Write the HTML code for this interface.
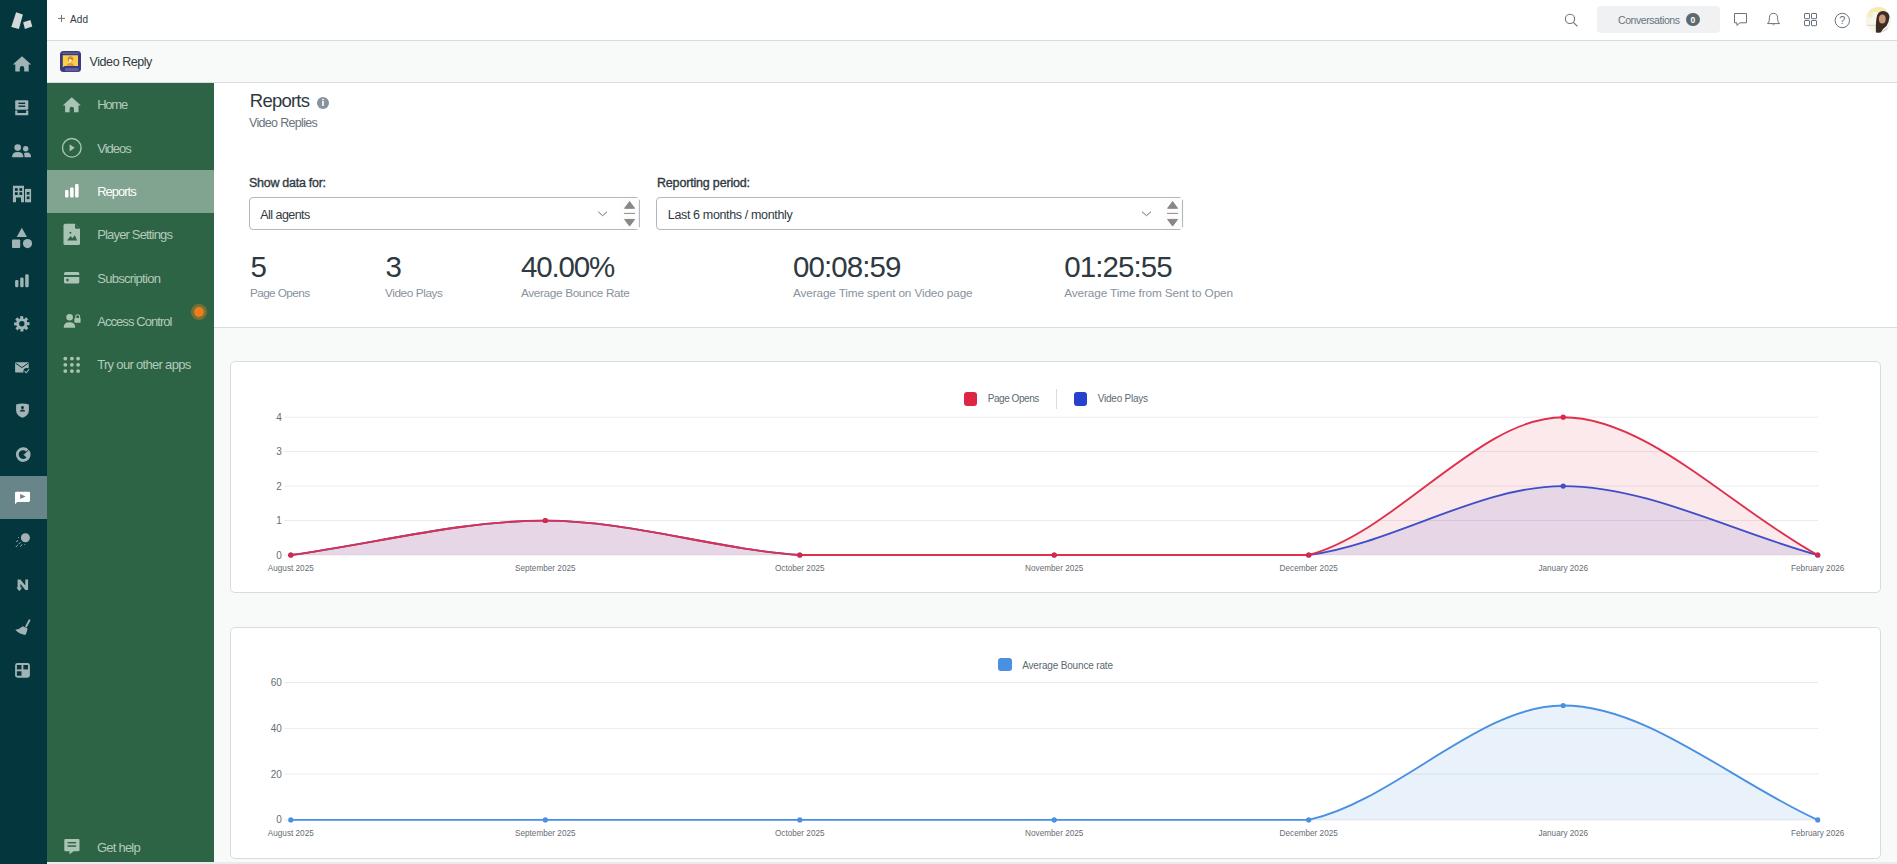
<!DOCTYPE html>
<html><head><meta charset="utf-8">
<style>
*{box-sizing:border-box;margin:0;padding:0}
html,body{width:1897px;height:864px;overflow:hidden;background:#e9ebed;font-family:"Liberation Sans",sans-serif}
.abs{position:absolute}
.tx{position:absolute;white-space:nowrap}
svg text{font-family:"Liberation Sans",sans-serif}
</style></head><body>
<div class="abs" style="left:0;top:0;width:47px;height:864px;background:#03363d"></div>
<div class="abs" style="left:47px;top:0;width:1850px;height:41px;background:#fff;border-bottom:1px solid #d8dcde"></div>
<div class="abs" style="left:47px;top:41px;width:1850px;height:42px;background:#f8f9f9;border-bottom:1px solid #d8dcde"></div>
<div class="abs" style="left:47px;top:83px;width:167px;height:779px;background:#2e6446"></div>
<div class="abs" style="left:214px;top:83px;width:1683px;height:779px;background:#f8f9f9"></div>
<div class="abs" style="left:214px;top:83px;width:1683px;height:245px;background:#fff;border-bottom:1px solid #d8dcde"></div>
<div class="abs" style="left:0;top:476px;width:47px;height:43px;background:#68868a"></div>
<div class="abs" style="left:47px;top:169.67px;width:167px;height:43.33px;background:#80a48f"></div>
<div class="abs" style="left:1597px;top:6px;width:123px;height:26.5px;background:#f0f1f3;border-radius:4px"></div>
<div class="abs" style="left:1686.2px;top:12.7px;width:13.4px;height:13.4px;border-radius:7px;background:#5c6970"></div>
<div class="abs" style="left:317px;top:96.9px;width:12px;height:12px;border-radius:6px;background:#87929d"></div>
<div class="abs" style="left:249px;top:197px;width:391px;height:33px;border:1px solid #b0b8be;border-radius:4px;background:#fff"></div>
<div class="abs" style="left:656px;top:197px;width:527px;height:33px;border:1px solid #b0b8be;border-radius:4px;background:#fff"></div>
<div class="abs" style="left:230px;top:361px;width:1651px;height:232px;background:#fff;border:1px solid #d8dcde;border-radius:5px"></div>
<div class="abs" style="left:230px;top:627px;width:1651px;height:232px;background:#fff;border:1px solid #d8dcde;border-radius:5px"></div>
<div class="tx" style="left:70.00px;top:14.54px;font-size:10px;line-height:10px;color:#2f3941;letter-spacing:0.100px;font-weight:400;">Add</div><div class="tx" style="left:1618.00px;top:14.91px;font-size:10.5px;line-height:10.5px;color:#68737d;letter-spacing:-0.425px;font-weight:400;">Conversations</div><div class="tx" style="left:89.60px;top:56.02px;font-size:12.5px;line-height:12.5px;color:#2f3941;letter-spacing:-0.440px;font-weight:400;">Video Reply</div><div class="tx" style="left:249.80px;top:92.34px;font-size:18.5px;line-height:18.5px;color:#2f3941;letter-spacing:-0.767px;font-weight:400;">Reports</div><div class="tx" style="left:249.00px;top:116.92px;font-size:12.5px;line-height:12.5px;color:#68737d;letter-spacing:-0.675px;font-weight:400;">Video Replies</div><div class="tx" style="left:249.00px;top:177.32px;font-size:12.5px;line-height:12.5px;color:#2f3941;letter-spacing:-0.277px;font-weight:400;-webkit-text-stroke:0.35px #2f3941;">Show data for:</div><div class="tx" style="left:657.00px;top:177.32px;font-size:12.5px;line-height:12.5px;color:#2f3941;letter-spacing:-0.181px;font-weight:400;-webkit-text-stroke:0.35px #2f3941;">Reporting period:</div><div class="tx" style="left:260.30px;top:209.32px;font-size:12.5px;line-height:12.5px;color:#2f3941;letter-spacing:-0.544px;font-weight:400;">All agents</div><div class="tx" style="left:667.80px;top:209.32px;font-size:12.5px;line-height:12.5px;color:#2f3941;letter-spacing:-0.355px;font-weight:400;">Last 6 months / monthly</div><div class="tx" style="left:250.40px;top:251.93px;font-size:29.5px;line-height:29.5px;color:#2f3941;letter-spacing:0.000px;font-weight:400;">5</div><div class="tx" style="left:385.50px;top:251.93px;font-size:29.5px;line-height:29.5px;color:#2f3941;letter-spacing:0.000px;font-weight:400;">3</div><div class="tx" style="left:521.00px;top:251.93px;font-size:29.5px;line-height:29.5px;color:#2f3941;letter-spacing:-1.140px;font-weight:400;">40.00%</div><div class="tx" style="left:793.00px;top:251.93px;font-size:29.5px;line-height:29.5px;color:#2f3941;letter-spacing:-0.914px;font-weight:400;">00:08:59</div><div class="tx" style="left:1064.20px;top:251.93px;font-size:29.5px;line-height:29.5px;color:#2f3941;letter-spacing:-0.900px;font-weight:400;">01:25:55</div><div class="tx" style="left:249.90px;top:287.91px;font-size:11.8px;line-height:11.8px;color:#87929d;letter-spacing:-0.589px;font-weight:400;">Page Opens</div><div class="tx" style="left:385.00px;top:287.91px;font-size:11.8px;line-height:11.8px;color:#87929d;letter-spacing:-0.410px;font-weight:400;">Video Plays</div><div class="tx" style="left:521.00px;top:287.91px;font-size:11.8px;line-height:11.8px;color:#87929d;letter-spacing:-0.356px;font-weight:400;">Average Bounce Rate</div><div class="tx" style="left:793.00px;top:287.91px;font-size:11.8px;line-height:11.8px;color:#87929d;letter-spacing:-0.135px;font-weight:400;">Average Time spent on Video page</div><div class="tx" style="left:1064.20px;top:287.91px;font-size:11.8px;line-height:11.8px;color:#87929d;letter-spacing:-0.114px;font-weight:400;">Average Time from Sent to Open</div><div class="tx" style="left:97.20px;top:98.30px;font-size:13px;line-height:13px;color:#b3cabb;letter-spacing:-1.233px;font-weight:400;">Home</div><div class="tx" style="left:97.20px;top:141.63px;font-size:13px;line-height:13px;color:#b3cabb;letter-spacing:-0.980px;font-weight:400;">Videos</div><div class="tx" style="left:97.20px;top:184.96px;font-size:13px;line-height:13px;color:#fff;letter-spacing:-1.000px;font-weight:400;">Reports</div><div class="tx" style="left:97.20px;top:228.29px;font-size:13px;line-height:13px;color:#b3cabb;letter-spacing:-0.836px;font-weight:400;">Player Settings</div><div class="tx" style="left:97.20px;top:271.62px;font-size:13px;line-height:13px;color:#b3cabb;letter-spacing:-0.709px;font-weight:400;">Subscription</div><div class="tx" style="left:97.20px;top:314.95px;font-size:13px;line-height:13px;color:#b3cabb;letter-spacing:-0.931px;font-weight:400;">Access Control</div><div class="tx" style="left:97.20px;top:358.28px;font-size:13px;line-height:13px;color:#b3cabb;letter-spacing:-0.688px;font-weight:400;">Try our other apps</div><div class="tx" style="left:96.90px;top:840.80px;font-size:13px;line-height:13px;color:#b3cabb;letter-spacing:-0.757px;font-weight:400;">Get help</div>
<svg class="abs" style="left:0;top:0" width="1897" height="864" viewBox="0 0 1897 864">
<polygon points="16.1,12.3 22.9,14.4 18.9,29 11.3,26.9" fill="#d3d9da"/>
<polygon points="23.2,22.3 30.4,19.9 32.3,26.6 24.9,29" fill="#d3d9da"/>
<path d="M22 56.2 L31.2 64.6 L28.7 64.6 L28.7 71.5 L24.2 71.5 L24.2 68.3 A2.2 2.2 0 0 0 19.8 68.3 L19.8 71.5 L15.3 71.5 L15.3 64.6 L12.8 64.6 Z" fill="#a1b3b5"/>
<rect x="15.2" y="100.3" width="13.1" height="9.4" rx="1" fill="#a1b3b5"/>
<rect x="18.4" y="102.6" width="6.8" height="1.4" fill="#03363d"/>
<rect x="18.4" y="105.5" width="6.8" height="1.4" fill="#03363d"/>
<path d="M15.2 110.6 H17.4 V112.9 H26.1 V110.6 H28.3 V114.4 Q28.3 115.3 27.4 115.3 H16.1 Q15.2 115.3 15.2 114.4 Z" fill="#a1b3b5"/>
<circle cx="17.7" cy="147.6" r="3.3" fill="#a1b3b5"/>
<path d="M12 157.3 Q12 152 17.7 152 Q23.4 152 23.4 157.3 Z" fill="#a1b3b5"/>
<circle cx="25.7" cy="148.8" r="2.7" fill="#a1b3b5"/>
<path d="M24 153.2 Q25 152.6 27 152.6 Q31.1 152.8 31.1 157.3 H24.6 Q24.6 155 24 153.2 Z" fill="#a1b3b5"/>
<path d="M12.9 185.7 H24 V202.3 H21 V197.4 H16 V202.3 H12.9 Z" fill="#a1b3b5"/>
<rect x="14.9" y="188.1" width="2.8" height="2.8" fill="#03363d"/>
<rect x="19.4" y="188.1" width="2.8" height="2.8" fill="#03363d"/>
<rect x="14.9" y="192.2" width="2.8" height="2.8" fill="#03363d"/>
<rect x="19.4" y="192.2" width="2.8" height="2.8" fill="#03363d"/>
<rect x="25" y="188.9" width="6.1" height="13.4" fill="#a1b3b5"/>
<rect x="26.7" y="192" width="2.8" height="2.6" fill="#03363d"/>
<rect x="26.7" y="196.5" width="2.8" height="2.6" fill="#03363d"/>
<polygon points="21.8,227.8 27,237 16.7,237" fill="#a1b3b5"/>
<rect x="12" y="239.4" width="8.2" height="8.6" rx="1" fill="#a1b3b5"/>
<circle cx="27.5" cy="243.6" r="4.6" fill="#a1b3b5"/>
<rect x="15.1" y="280" width="3.3" height="7.3" rx="1.3" fill="#a1b3b5"/>
<rect x="20.2" y="277.6" width="3.4" height="9.7" rx="1.3" fill="#a1b3b5"/>
<rect x="25.2" y="274.3" width="3.5" height="13" rx="1.3" fill="#a1b3b5"/>
<rect x="20.20" y="316.10" width="3" height="4" transform="rotate(0 21.8 323.8)" fill="#a1b3b5"/>
<rect x="20.20" y="316.10" width="3" height="4" transform="rotate(45 21.8 323.8)" fill="#a1b3b5"/>
<rect x="20.20" y="316.10" width="3" height="4" transform="rotate(90 21.8 323.8)" fill="#a1b3b5"/>
<rect x="20.20" y="316.10" width="3" height="4" transform="rotate(135 21.8 323.8)" fill="#a1b3b5"/>
<rect x="20.20" y="316.10" width="3" height="4" transform="rotate(180 21.8 323.8)" fill="#a1b3b5"/>
<rect x="20.20" y="316.10" width="3" height="4" transform="rotate(225 21.8 323.8)" fill="#a1b3b5"/>
<rect x="20.20" y="316.10" width="3" height="4" transform="rotate(270 21.8 323.8)" fill="#a1b3b5"/>
<rect x="20.20" y="316.10" width="3" height="4" transform="rotate(315 21.8 323.8)" fill="#a1b3b5"/>
<circle cx="21.8" cy="323.8" r="5.6" fill="#a1b3b5"/>
<circle cx="21.8" cy="323.8" r="2.7" fill="#03363d"/>
<rect x="15.1" y="362.3" width="13.6" height="10.2" rx="0.8" fill="#a1b3b5"/>
<polyline points="15.6,363.2 21.9,367.6 28.2,363.2" fill="none" stroke="#03363d" stroke-width="1"/>
<circle cx="26.8" cy="371.4" r="3.4" fill="#03363d"/>
<polyline points="24.6,371.2 26.1,372.8 29.2,369.4" fill="none" stroke="#a1b3b5" stroke-width="1.1"/>
<path d="M16.1 404.6 Q22.5 402.4 28.9 404.6 V410.2 Q28.9 415.4 22.5 417.7 Q16.1 415.4 16.1 410.2 Z" fill="#a1b3b5"/>
<circle cx="22.5" cy="407.6" r="1.5" fill="#03363d"/>
<path d="M19.9 411.6 Q19.9 409.6 22.5 409.6 Q25.1 409.6 25.1 411.6 Z" fill="#03363d"/>
<path d="M29 450.2 A7.3 7.3 0 1 0 29 459 L26.6 457.2 A4.4 4.4 0 1 1 26.6 452 Z" fill="#a1b3b5"/>
<path d="M23.3 454.6 L28.6 449.6 A7.3 7.3 0 0 1 28.6 459.6 Z" fill="#a1b3b5"/>
<line x1="23.6" y1="454.6" x2="29.6" y2="448.8" stroke="#03363d" stroke-width="0.9"/>
<circle cx="25.4" cy="537.8" r="4.5" fill="#a1b3b5"/>
<line x1="20.6" y1="542.2" x2="15.8" y2="547" stroke="#a1b3b5" stroke-width="1" stroke-dasharray="3 1.2"/>
<line x1="18.2" y1="540.6" x2="16.2" y2="541.6" stroke="#a1b3b5" stroke-width="1"/>
<line x1="22" y1="544.4" x2="20.5" y2="546.5" stroke="#a1b3b5" stroke-width="1"/>
<circle cx="18.6" cy="537.4" r="0.5" fill="#a1b3b5"/>
<circle cx="24.8" cy="544.6" r="0.5" fill="#a1b3b5"/>
<path d="M17.6 579.4 H20.4 L25.3 585.6 V579.4 H28.1 V589.9 H25.3 L20.4 583.8 V587.6 H22.2 L19.3 591.2 L16.4 587.6 H17.6 Z" fill="#a1b3b5"/>
<line x1="29.4" y1="620.4" x2="26.2" y2="626.4" stroke="#a1b3b5" stroke-width="2" stroke-linecap="round"/>
<path d="M22.9 626.3 L27.6 628.6 Q27 632.5 25.4 635.1 Q19 634 15.3 629.8 Q19.5 629.2 22.9 626.3 Z" fill="#a1b3b5"/>
<rect x="15.1" y="663.1" width="14.8" height="14.6" rx="2.4" fill="#a1b3b5"/>
<rect x="16.9" y="665" width="4.6" height="4.4" fill="#03363d"/>
<rect x="23.4" y="665" width="4.6" height="4.4" fill="#03363d"/>
<rect x="16.9" y="671.3" width="4.6" height="4.4" fill="#03363d"/>
<path d="M16.4 491.7 H28.6 Q30 491.7 30 493.1 V500.6 Q30 502 28.6 502 H17.2 L15 504.2 V493.1 Q15 491.7 16.4 491.7 Z" fill="#fff"/>
<polygon points="20.2,493.9 25.6,496.4 20.2,498.9" fill="#68868a"/>
<path d="M71.8 97.3 L80.9 105.4 L78.5 105.4 L78.5 112.3 L74 112.3 L74 109 A2.2 2.2 0 0 0 69.6 109 L69.6 112.3 L65.1 112.3 L65.1 105.4 L62.7 105.4 Z" fill="#a9c4b3"/>
<circle cx="71.8" cy="147.8" r="9.3" fill="none" stroke="#a9c4b3" stroke-width="1.4"/>
<polygon points="69.6,144.2 69.6,151.4 74.8,147.8" fill="#a9c4b3"/>
<rect x="65.1" y="189.9" width="3.4" height="7.6" rx="1.1" fill="#fff"/>
<rect x="70.1" y="187.4" width="3.5" height="10.1" rx="1.1" fill="#fff"/>
<rect x="75.1" y="184" width="3.5" height="13.5" rx="1.1" fill="#fff"/>
<path d="M65 223.8 H75 L80 228.8 V243.6 Q80 245.1 78.5 245.1 H65 Q63.5 245.1 63.5 243.6 V225.3 Q63.5 223.8 65 223.8 Z" fill="#a9c4b3"/>
<path d="M75 223.8 V227.3 Q75 228.8 76.5 228.8 H80" fill="#2e6446"/>
<path d="M76.3 224.6 L79.2 227.6 H76.3 Z" fill="#a9c4b3" opacity="0"/>
<path d="M67 240.6 L70.6 236 L72.4 238.2 L74.8 235.2 L77.2 240.6 Z" fill="#2e6446"/>
<circle cx="70.4" cy="232.8" r="1" fill="#2e6446"/>
<path d="M65.5 272 H77.8 Q79.3 272 79.3 273.5 V275 H64 V273.5 Q64 272 65.5 272 Z" fill="#a9c4b3"/>
<path d="M64 276.9 H79.3 V282 Q79.3 283.5 77.8 283.5 H65.5 Q64 283.5 64 282 Z" fill="#a9c4b3"/>
<circle cx="67.5" cy="280.1" r="1.3" fill="#2e6446"/>
<circle cx="69.6" cy="317.3" r="3.3" fill="#a9c4b3"/>
<path d="M63.7 327.7 Q63.7 322.3 69.4 322.3 Q75.2 322.3 75.2 327.7 Z" fill="#a9c4b3"/>
<path d="M75.8 318.2 V316.6 A1.9 1.9 0 0 1 79.6 316.6 V318.2" fill="none" stroke="#a9c4b3" stroke-width="1.1"/>
<rect x="74.4" y="318" width="6.2" height="4.7" rx="0.7" fill="#a9c4b3"/>
<circle cx="65.3" cy="358.6" r="1.9" fill="#a9c4b3"/>
<circle cx="71.9" cy="358.6" r="1.9" fill="#a9c4b3"/>
<circle cx="78.1" cy="358.6" r="1.9" fill="#a9c4b3"/>
<circle cx="65.3" cy="364.8" r="1.9" fill="#a9c4b3"/>
<circle cx="71.9" cy="364.8" r="1.9" fill="#a9c4b3"/>
<circle cx="78.1" cy="364.8" r="1.9" fill="#a9c4b3"/>
<circle cx="65.3" cy="371.1" r="1.9" fill="#a9c4b3"/>
<circle cx="71.9" cy="371.1" r="1.9" fill="#a9c4b3"/>
<circle cx="78.1" cy="371.1" r="1.9" fill="#a9c4b3"/>
<path d="M65.3 839.1 H78.5 Q79.5 839.1 79.5 840.1 V850.3 Q79.5 851.3 78.5 851.3 H73.6 L69.5 854.3 V851.3 H65.3 Q64.3 851.3 64.3 850.3 V840.1 Q64.3 839.1 65.3 839.1 Z" fill="#a9c4b3"/>
<rect x="67.6" y="842" width="8.5" height="1.4" fill="#2e6446"/>
<rect x="67.6" y="845.3" width="8.5" height="1.5" fill="#2e6446"/>
<circle cx="199" cy="312" r="8" fill="#e8801d" opacity="0.4"/>
<circle cx="199" cy="312" r="4.9" fill="#ec7e1b"/>
<line x1="58" y1="18.4" x2="65" y2="18.4" stroke="#68737d" stroke-width="1"/>
<line x1="61.5" y1="15" x2="61.5" y2="22" stroke="#68737d" stroke-width="1"/>
<circle cx="1570" cy="18.9" r="4.6" fill="none" stroke="#68737d" stroke-width="1.1"/>
<line x1="1573.4" y1="22.3" x2="1577.4" y2="26.3" stroke="#68737d" stroke-width="1.1"/>
<path d="M1734.5 13.5 H1746.5 V22.8 H1740 L1736.9 25.4 V22.8 H1734.5 Z" fill="none" stroke="#68737d" stroke-width="1"/>
<path d="M1767.5 23.6 Q1769.4 22 1769.4 19.2 V17.6 Q1769.4 13.4 1773.5 13.4 Q1777.6 13.4 1777.6 17.6 V19.2 Q1777.6 22 1779.6 23.6 Z" fill="none" stroke="#68737d" stroke-width="1"/>
<path d="M1772.5 24 Q1773.5 25.6 1774.5 24" fill="none" stroke="#68737d" stroke-width="1"/>
<rect x="1804.5" y="13.5" width="5" height="5.2" rx="0.5" fill="none" stroke="#68737d" stroke-width="1"/>
<rect x="1811.5" y="13.5" width="5" height="5.2" rx="0.5" fill="none" stroke="#68737d" stroke-width="1"/>
<rect x="1804.5" y="20.5" width="5" height="5.2" rx="0.5" fill="none" stroke="#68737d" stroke-width="1"/>
<rect x="1811.5" y="20.5" width="5" height="5.2" rx="0.5" fill="none" stroke="#68737d" stroke-width="1"/>
<circle cx="1842.3" cy="20.5" r="7.2" fill="none" stroke="#68737d" stroke-width="1"/>
<text x="1842.3" y="24.4" font-size="11" fill="#68737d" text-anchor="middle">?</text>
<rect x="60" y="51" width="21" height="21" rx="3.5" fill="#3a3a7c"/>
<rect x="62" y="52.3" width="17" height="1.6" rx="0.8" fill="#5b5b9d"/>
<path d="M62.8 55.3 H78 V66 H64.5 L62.8 67.3 Z" fill="#f9cf4c"/>
<circle cx="70.4" cy="59" r="2.8" fill="#d38a33"/>
<path d="M66.8 66 Q66.8 63 70.4 63 Q74 63 74 66 Z" fill="#e09a3c"/>
<polygon points="69.3,58.8 69.3,62.4 72.3,60.6" fill="#fff"/>
<rect x="65" y="68" width="13.6" height="3.2" rx="0.8" fill="#5e5e9f"/>
<text x="1692.9" y="22.6" font-size="8.6" font-weight="bold" fill="#fff" text-anchor="middle">0</text>
<rect x="322.2" y="101" width="1.6" height="5" fill="#fff"/><circle cx="323" cy="99.6" r="0.9" fill="#fff"/>
<!-- selects -->
<polyline points="598.2,211.7 602.6,215.7 607,211.7" fill="none" stroke="#68737d" stroke-width="1"/>
<polyline points="1142,211.7 1146.5,215.7 1151,211.7" fill="none" stroke="#68737d" stroke-width="1"/>
<rect x="620.5" y="198" width="20" height="31" fill="#fdfdfd"/>
<line x1="639.4" y1="199.8" x2="639.4" y2="227.2" stroke="#b0b8be" stroke-width="1.1"/>
<polygon points="629.6,201.6 634.6,208.3 624.6,208.3" fill="#888" stroke="#888" stroke-width="1" stroke-linejoin="round"/><line x1="624" y1="213.4" x2="635" y2="213.4" stroke="#857a72" stroke-width="0.9"/><polygon points="624.6,219.4 634.6,219.4 629.6,226.1" fill="#888" stroke="#888" stroke-width="1" stroke-linejoin="round"/>
<rect x="1163.5" y="198" width="20" height="31" fill="#fdfdfd"/>
<line x1="1182.5" y1="199.8" x2="1182.5" y2="227.2" stroke="#b0b8be" stroke-width="1.1"/>
<polygon points="1172.6,201.6 1177.6,208.3 1167.6,208.3" fill="#888" stroke="#888" stroke-width="1" stroke-linejoin="round"/><line x1="1167" y1="213.4" x2="1178" y2="213.4" stroke="#857a72" stroke-width="0.9"/><polygon points="1167.6,219.4 1177.6,219.4 1172.6,226.1" fill="#888" stroke="#888" stroke-width="1" stroke-linejoin="round"/>
<!-- chart 1 legend -->
<rect x="964" y="392" width="13" height="14" rx="3" fill="#dc2643"/>
<text x="987.70" y="402.40" font-size="10" fill="#5c6970" letter-spacing="-0.444" text-anchor="start" font-weight="400">Page Opens</text>
<line x1="1056.5" y1="389" x2="1056.5" y2="409" stroke="#d8dcde"/>
<rect x="1074" y="392" width="13" height="14" rx="3" fill="#2541cd"/>
<text x="1097.80" y="402.40" font-size="10" fill="#5c6970" letter-spacing="-0.240" text-anchor="start" font-weight="400">Video Plays</text>
<line x1="284.3" y1="555.0" x2="1818" y2="555.0" stroke="#eaebec" stroke-width="1"/>
<text x="281.80" y="558.50" font-size="10" fill="#666d73" letter-spacing="0.000" text-anchor="end" font-weight="400">0</text>
<line x1="284.3" y1="520.5" x2="1818" y2="520.5" stroke="#eaebec" stroke-width="1"/>
<text x="281.80" y="524.05" font-size="10" fill="#666d73" letter-spacing="0.000" text-anchor="end" font-weight="400">1</text>
<line x1="284.3" y1="486.1" x2="1818" y2="486.1" stroke="#eaebec" stroke-width="1"/>
<text x="281.80" y="489.60" font-size="10" fill="#666d73" letter-spacing="0.000" text-anchor="end" font-weight="400">2</text>
<line x1="284.3" y1="451.6" x2="1818" y2="451.6" stroke="#eaebec" stroke-width="1"/>
<text x="281.80" y="455.15" font-size="10" fill="#666d73" letter-spacing="0.000" text-anchor="end" font-weight="400">3</text>
<line x1="284.3" y1="417.2" x2="1818" y2="417.2" stroke="#eaebec" stroke-width="1"/>
<text x="281.80" y="420.70" font-size="10" fill="#666d73" letter-spacing="0.000" text-anchor="end" font-weight="400">4</text>
<text x="290.80" y="570.90" font-size="8.2" fill="#666d73" letter-spacing="0.000" text-anchor="middle" font-weight="400">August 2025</text>
<text x="545.28" y="570.90" font-size="8.2" fill="#666d73" letter-spacing="0.000" text-anchor="middle" font-weight="400">September 2025</text>
<text x="799.76" y="570.90" font-size="8.2" fill="#666d73" letter-spacing="0.000" text-anchor="middle" font-weight="400">October 2025</text>
<text x="1054.24" y="570.90" font-size="8.2" fill="#666d73" letter-spacing="0.000" text-anchor="middle" font-weight="400">November 2025</text>
<text x="1308.72" y="570.90" font-size="8.2" fill="#666d73" letter-spacing="0.000" text-anchor="middle" font-weight="400">December 2025</text>
<text x="1563.20" y="570.90" font-size="8.2" fill="#666d73" letter-spacing="0.000" text-anchor="middle" font-weight="400">January 2026</text>
<text x="1817.68" y="570.90" font-size="8.2" fill="#666d73" letter-spacing="0.000" text-anchor="middle" font-weight="400">February 2026</text>
<path d="M290.80,555.00 C374.78,543.63 461.30,520.55 545.28,520.55 C629.26,520.55 715.40,549.29 799.76,555.00 C883.36,555.00 970.26,555.00 1054.24,555.00 C1138.22,555.00 1226.23,555.00 1308.72,555.00 C1394.18,543.43 1479.22,486.10 1563.20,486.10 C1647.18,486.10 1733.70,532.26 1817.68,555.00 L1817.68,555.0 L290.8,555.0 Z" fill="rgba(40,60,200,0.1)"/>
<path d="M290.80,555.00 C374.78,543.63 461.30,520.55 545.28,520.55 C629.26,520.55 715.40,549.29 799.76,555.00 C883.36,555.00 970.26,555.00 1054.24,555.00 C1138.22,555.00 1230.13,555.00 1308.72,555.00 C1398.09,530.80 1479.22,417.20 1563.20,417.20 C1647.18,417.20 1733.70,509.53 1817.68,555.00 L1817.68,555.0 L290.8,555.0 Z" fill="rgba(220,38,67,0.1)"/>
<path d="M290.80,555.00 C374.78,543.63 461.30,520.55 545.28,520.55 C629.26,520.55 715.40,549.29 799.76,555.00 C883.36,555.00 970.26,555.00 1054.24,555.00 C1138.22,555.00 1226.23,555.00 1308.72,555.00 C1394.18,543.43 1479.22,486.10 1563.20,486.10 C1647.18,486.10 1733.70,532.26 1817.68,555.00" fill="none" stroke="#3d4ec9" stroke-width="1.85"/>
<path d="M290.80,555.00 C374.78,543.63 461.30,520.55 545.28,520.55 C629.26,520.55 715.40,549.29 799.76,555.00 C883.36,555.00 970.26,555.00 1054.24,555.00 C1138.22,555.00 1230.13,555.00 1308.72,555.00 C1398.09,530.80 1479.22,417.20 1563.20,417.20 C1647.18,417.20 1733.70,509.53 1817.68,555.00" fill="none" stroke="#de2f4c" stroke-width="1.85"/>
<circle cx="290.8" cy="555.0" r="2.6" fill="#3d4ec9"/>
<circle cx="545.3" cy="520.5" r="2.6" fill="#3d4ec9"/>
<circle cx="799.8" cy="555.0" r="2.6" fill="#3d4ec9"/>
<circle cx="1054.2" cy="555.0" r="2.6" fill="#3d4ec9"/>
<circle cx="1308.7" cy="555.0" r="2.6" fill="#3d4ec9"/>
<circle cx="1563.2" cy="486.1" r="2.6" fill="#3d4ec9"/>
<circle cx="1817.7" cy="555.0" r="2.6" fill="#3d4ec9"/>
<circle cx="290.8" cy="555.0" r="2.6" fill="#dc2643"/>
<circle cx="545.3" cy="520.5" r="2.6" fill="#dc2643"/>
<circle cx="799.8" cy="555.0" r="2.6" fill="#dc2643"/>
<circle cx="1054.2" cy="555.0" r="2.6" fill="#dc2643"/>
<circle cx="1308.7" cy="555.0" r="2.6" fill="#dc2643"/>
<circle cx="1563.2" cy="417.2" r="2.6" fill="#dc2643"/>
<circle cx="1817.7" cy="555.0" r="2.6" fill="#dc2643"/>
<rect x="998" y="658" width="14" height="13" rx="3" fill="#4a90e2"/>
<text x="1022.20" y="668.50" font-size="10" fill="#5c6970" letter-spacing="-0.167" text-anchor="start" font-weight="400">Average Bounce rate</text>
<line x1="284.3" y1="819.9" x2="1818" y2="819.9" stroke="#eaebec" stroke-width="1"/>
<text x="281.80" y="823.40" font-size="10" fill="#666d73" letter-spacing="0.000" text-anchor="end" font-weight="400">0</text>
<line x1="284.3" y1="774.1" x2="1818" y2="774.1" stroke="#eaebec" stroke-width="1"/>
<text x="281.80" y="777.63" font-size="10" fill="#666d73" letter-spacing="0.000" text-anchor="end" font-weight="400">20</text>
<line x1="284.3" y1="728.4" x2="1818" y2="728.4" stroke="#eaebec" stroke-width="1"/>
<text x="281.80" y="731.86" font-size="10" fill="#666d73" letter-spacing="0.000" text-anchor="end" font-weight="400">40</text>
<line x1="284.3" y1="682.6" x2="1818" y2="682.6" stroke="#eaebec" stroke-width="1"/>
<text x="281.80" y="686.09" font-size="10" fill="#666d73" letter-spacing="0.000" text-anchor="end" font-weight="400">60</text>
<text x="290.80" y="835.90" font-size="8.2" fill="#666d73" letter-spacing="0.000" text-anchor="middle" font-weight="400">August 2025</text>
<text x="545.28" y="835.90" font-size="8.2" fill="#666d73" letter-spacing="0.000" text-anchor="middle" font-weight="400">September 2025</text>
<text x="799.76" y="835.90" font-size="8.2" fill="#666d73" letter-spacing="0.000" text-anchor="middle" font-weight="400">October 2025</text>
<text x="1054.24" y="835.90" font-size="8.2" fill="#666d73" letter-spacing="0.000" text-anchor="middle" font-weight="400">November 2025</text>
<text x="1308.72" y="835.90" font-size="8.2" fill="#666d73" letter-spacing="0.000" text-anchor="middle" font-weight="400">December 2025</text>
<text x="1563.20" y="835.90" font-size="8.2" fill="#666d73" letter-spacing="0.000" text-anchor="middle" font-weight="400">January 2026</text>
<text x="1817.68" y="835.90" font-size="8.2" fill="#666d73" letter-spacing="0.000" text-anchor="middle" font-weight="400">February 2026</text>
<path d="M290.80,819.90 C374.78,819.90 461.30,819.90 545.28,819.90 C629.26,819.90 715.78,819.90 799.76,819.90 C883.74,819.90 970.26,819.90 1054.24,819.90 C1138.22,819.90 1228.60,819.90 1308.72,819.90 C1396.56,800.15 1479.22,705.48 1563.20,705.48 C1647.18,705.48 1733.70,782.14 1817.68,819.90 L1817.68,819.9 L290.8,819.9 Z" fill="rgba(74,144,226,0.12)"/>
<path d="M290.80,819.90 C374.78,819.90 461.30,819.90 545.28,819.90 C629.26,819.90 715.78,819.90 799.76,819.90 C883.74,819.90 970.26,819.90 1054.24,819.90 C1138.22,819.90 1228.60,819.90 1308.72,819.90 C1396.56,800.15 1479.22,705.48 1563.20,705.48 C1647.18,705.48 1733.70,782.14 1817.68,819.90" fill="none" stroke="#4a90e2" stroke-width="1.85"/>
<circle cx="290.8" cy="819.9" r="2.6" fill="#4a90e2"/>
<circle cx="545.3" cy="819.9" r="2.6" fill="#4a90e2"/>
<circle cx="799.8" cy="819.9" r="2.6" fill="#4a90e2"/>
<circle cx="1054.2" cy="819.9" r="2.6" fill="#4a90e2"/>
<circle cx="1308.7" cy="819.9" r="2.6" fill="#4a90e2"/>
<circle cx="1563.2" cy="705.5" r="2.6" fill="#4a90e2"/>
<circle cx="1817.7" cy="819.9" r="2.6" fill="#4a90e2"/>
<defs><clipPath id="av"><circle cx="1878.4" cy="19.8" r="12.9"/></clipPath></defs>
<g clip-path="url(#av)">
<rect x="1865" y="6" width="27" height="28" fill="#f7f6ee"/>
<ellipse cx="1878" cy="9" rx="9" ry="3.5" fill="#f2e27a" opacity="0.55"/>
<ellipse cx="1870" cy="14" rx="3" ry="4" fill="#f3eaa6" opacity="0.6"/>
<line x1="1866" y1="25.3" x2="1876" y2="25.3" stroke="#d8cfa0" stroke-width="0.8"/>
<path d="M1892 34 L1880 34 Q1884 28 1892 26 Z" fill="#d3d9de"/>
<path d="M1876 33 Q1875.5 24 1876.5 18 Q1877.5 11 1883 11 Q1889 11.5 1889.5 17 Q1889 22 1886.5 26 Q1882 29 1880 34 Z" fill="#3d2b22"/>
<ellipse cx="1882.3" cy="19" rx="3.4" ry="4.6" fill="#c9997e"/>
</g>
</svg>
</body></html>
